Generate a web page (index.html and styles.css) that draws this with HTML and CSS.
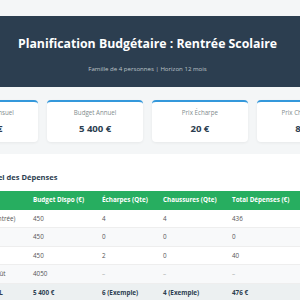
FILE: index.html
```html
<!DOCTYPE html>
<html lang="fr">
<head>
<meta charset="utf-8">
<title>Planification Budgétaire</title>
<link rel="stylesheet" href="styles.css">
</head>
<body>
<div class="page">
  <header class="header">
    <h1 class="title">Planification Budgétaire : Rentrée Scolaire</h1>
    <p class="subtitle">Famille de 4 personnes | Horizon 12 mois</p>
  </header>
  <section class="stats">
    <div class="stat"><div class="stat-label">Budget Mensuel</div><div class="stat-value">450 €</div></div>
    <div class="stat"><div class="stat-label">Budget Annuel</div><div class="stat-value">5 400 €</div></div>
    <div class="stat"><div class="stat-label">Prix Écharpe</div><div class="stat-value">20 €</div></div>
    <div class="stat"><div class="stat-label">Prix Chaussures</div><div class="stat-value">89 €</div></div>
  </section>
  <section class="panel">
    <h2 class="panel-title">Détail Mensuel des Dépenses</h2>
    <table class="table">
      <colgroup>
        <col class="c-month"><col class="c-budget"><col class="c-echarpe"><col class="c-chaussure"><col class="c-total">
      </colgroup>
      <thead>
        <tr><th>Mois</th><th>Budget Dispo (€)</th><th>Écharpes (Qte)</th><th>Chaussures (Qte)</th><th>Total Dépenses (€)</th></tr>
      </thead>
      <tbody>
        <tr><td>Septembre (Rentrée)</td><td>450</td><td>4</td><td>4</td><td>436</td></tr>
        <tr><td>Octobre</td><td>450</td><td>0</td><td>0</td><td>0</td></tr>
        <tr><td>Novembre</td><td>450</td><td>2</td><td>0</td><td>40</td></tr>
        <tr><td>Décembre à Août</td><td>4050</td><td class="dash">–</td><td class="dash">–</td><td class="dash">–</td></tr>
        <tr class="total"><td>TOTAL ANNUEL</td><td>5 400 €</td><td>6 (Exemple)</td><td>4 (Exemple)</td><td>476 €</td></tr>
      </tbody>
    </table>
  </section>
</div>
</body>
</html>
```
FILE: styles.css
```css
html {
  overflow: hidden;
}
body {
  margin: 0;
  padding: 16px 5px 0 0;
  background: #f4f6f7;
  font-family: "Open Sans", "Liberation Sans", sans-serif;
  display: flex;
  justify-content: center;
}
.page {
  width: 410px;
  flex-shrink: 0;
}
.header {
  background: #2c3e50;
  color: #fff;
  text-align: center;
  padding: 20px 0 14px;
}
.title {
  margin: 0;
  font-size: 12.3px;
  line-height: 15px;
  font-weight: 700;
}
.subtitle {
  margin: 13.5px 0 0;
  font-size: 6.1px;
  line-height: 8px;
  color: #bdc3c7;
}
.stats {
  display: grid;
  grid-template-columns: repeat(4, 1fr);
  gap: 9px;
  margin-top: 13px;
}
.stat {
  background: #fff;
  border-top: 2px solid #3498db;
  border-radius: 4px;
  padding: 7px 0;
  text-align: center;
  box-shadow: 0 1px 3px rgba(0, 0, 0, 0.06);
}
.stat-label {
  font-size: 6.2px;
  line-height: 8px;
  color: #7f8c8d;
}
.stat-value {
  margin-top: 6px;
  font-size: 9.6px;
  line-height: 12px;
  font-weight: 700;
  color: #2c3e50;
}
.panel {
  background: #fff;
  margin-top: 12px;
  padding: 18px 6px 10px;
  border-radius: 4px;
}
.panel-title {
  margin: 0 0 9px;
  font-size: 7.5px;
  line-height: 10px;
  font-weight: 700;
  color: #2c3e50;
}
.table {
  width: 100%;
  border-collapse: collapse;
  table-layout: fixed;
  font-size: 6.3px;
}
.c-month { width: 78.5px; }
.c-budget { width: 69px; }
.c-echarpe { width: 61px; }
.c-chaussure { width: 69px; }
.table th {
  background: #27ae60;
  color: #fff;
  font-weight: 700;
  text-align: left;
  padding: 5.5px 6px;
  line-height: 8px;
}
.table td {
  padding: 5px 6px;
  line-height: 7.5px;
  color: #555;
  border-bottom: 1px solid #eeeeee;
  white-space: nowrap;
}
.table tbody tr:nth-child(even) td {
  background: #f8f9fa;
}
.table td.dash {
  color: #aaa;
}
.table tr.total td {
  background: #ecf0f1;
  font-weight: 700;
  color: #2c3e50;
}
```
